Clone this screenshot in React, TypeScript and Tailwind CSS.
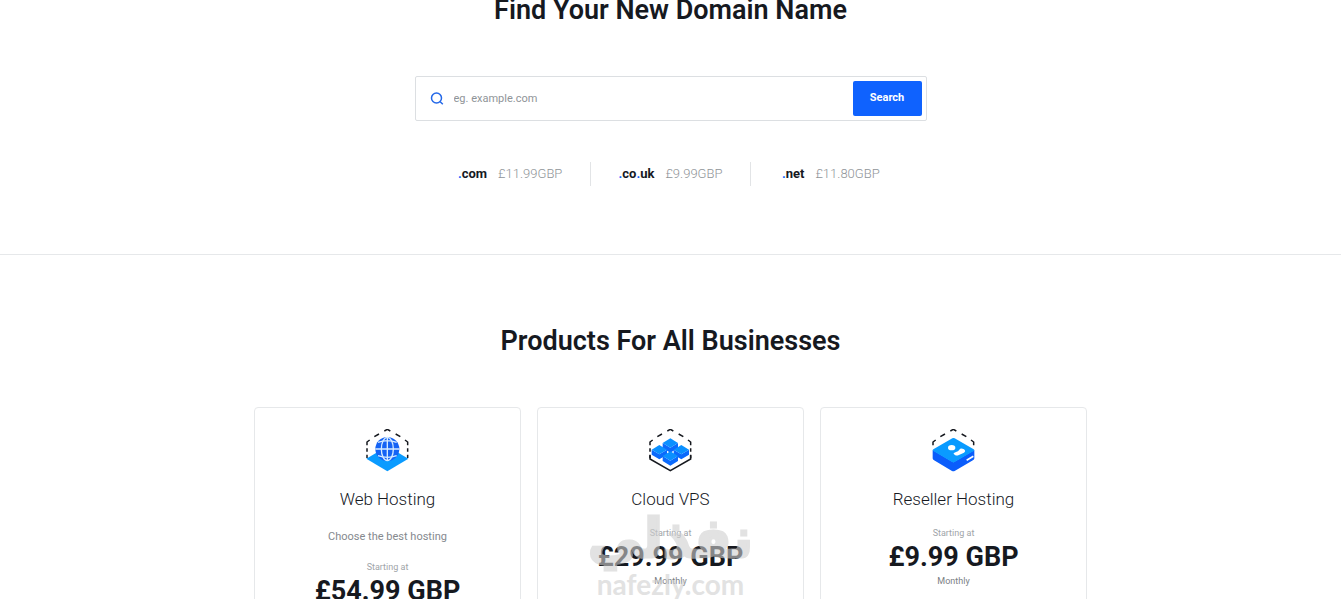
import type { ReactNode } from 'react';

interface Extension {
  parts: string[];
  price: string;
}

interface Product {
  name: string;
  description?: string;
  price: string;
  icon: ReactNode;
}

const extensions: Extension[] = [
  { parts: ['com'], price: '£11.99GBP' },
  { parts: ['co', 'uk'], price: '£9.99GBP' },
  { parts: ['net'], price: '£11.80GBP' },
];

function DashedFrame({ children, sides = true }: { children: ReactNode; sides?: boolean }) {
  return (
    <svg viewBox="34 28 132 132" className="h-11 w-11" aria-hidden="true">
      <g fill="none" stroke="#16191f" strokeWidth="4.5">
        <path d="M89 34L98 29L107 34M59 51L73 43M123 43L137 51M37 77V67L45 61M151 61L159 67V77" />
        {sides && <path d="M37 86V96M37 105V115M159 86V96M159 105V115" />}
      </g>
      {children}
    </svg>
  );
}

function WebHostingIcon() {
  return (
    <DashedFrame>
      <path d="M98 80L161 117L98 155L35 117Z" fill="#0a9bff" />
      <circle cx="98" cy="88" r="36" fill="#1463f5" />
      <g fill="none" stroke="#d5ebff" strokeWidth="4">
        <ellipse cx="98" cy="88" rx="18" ry="35" />
        <path d="M98 53V124M62 88H134M70 68Q98 58 126 68M70 108Q98 118 126 108" />
      </g>
    </DashedFrame>
  );
}

function Cube({ x, y }: { x: number; y: number }) {
  return (
    <g transform={`translate(${x} ${y})`}>
      <path d="M-23 0L0 14L23 0V15L0 29L-23 15Z" fill="#0b6afc" />
      <path d="M0 -14L23 0L0 14L-23 0Z" fill="#0a90ff" />
    </g>
  );
}

function CloudIcon() {
  return (
    <DashedFrame>
      <path d="M37 107V118L98 153L159 118V107" fill="none" stroke="#16191f" strokeWidth="4.5" />
      <Cube x={98} y={70} />
      <Cube x={65} y={90} />
      <Cube x={131} y={90} />
      <Cube x={98} y={109} />
    </DashedFrame>
  );
}

function ResellerIcon() {
  return (
    <DashedFrame sides={false}>
      <path d="M36 91L98 128L161 91V116Q161 119 158 121L102 154Q98 156 94 154L39 121Q36 119 36 116Z" fill="#0b5dfb" />
      <path d="M95 56Q98 54 102 56L159 89Q163 91 159 94L102 127Q98 129 94 127L38 94Q34 91 38 89Z" fill="#0a9bff" />
      <ellipse cx="93" cy="84" rx="11" ry="8" fill="#fff" />
      <path d="M102 105Q94 101 106 97Q113 96 116 90Q120 83 130 89Q137 95 130 99L113 107Q107 109 102 105Z" fill="#fff" />
      <path d="M138 122L158 110" stroke="#fff" strokeWidth="5" />
    </DashedFrame>
  );
}

const products: Product[] = [
  { name: 'Web Hosting', description: 'Choose the best hosting', price: '£54.99 GBP', icon: <WebHostingIcon /> },
  { name: 'Cloud VPS', price: '£29.99 GBP', icon: <CloudIcon /> },
  { name: 'Reseller Hosting', price: '£9.99 GBP', icon: <ResellerIcon /> },
];

function DomainSearch() {
  return (
    <form
      className="mx-auto flex w-full max-w-lg items-center rounded-xs border border-[#dcdfe2] bg-white p-1"
      onSubmit={(event) => event.preventDefault()}
    >
      <svg viewBox="0 0 14 14" className="ml-2.5 h-3.5 w-3.5 shrink-0" fill="none" stroke="#2468e8" strokeWidth="1.5" aria-hidden="true">
        <circle cx="6.5" cy="6" r="5" />
        <path d="M10.2 9.7L12.8 12.3" />
      </svg>
      <input
        type="text"
        aria-label="Domain name"
        placeholder="eg. example.com"
        className="h-[35px] min-w-0 flex-1 px-2.5 text-[11px] text-[#16191f] outline-none placeholder:text-[#8f9498]"
      />
      <button type="submit" className="h-[35px] w-[69px] rounded-xs bg-[#0f62fe] text-[11px] font-bold text-white">
        Search
      </button>
    </form>
  );
}

function ExtensionPrice({ parts, price }: Extension) {
  return (
    <li className="flex h-6 flex-1 items-center justify-center gap-[11px] border-r border-[#e2e4e6] text-[13px] leading-5 last:border-r-0">
      <strong className="font-bold text-[#16191f]">
        {parts.map((part) => (
          <span key={part}>
            <span className="text-[#0f62fe]">.</span>
            {part}
          </span>
        ))}
      </strong>
      <span className="font-light text-[#8f9498]">{price}</span>
    </li>
  );
}

function ProductCard({ name, description, price, icon }: Product) {
  return (
    <article className="flex flex-1 flex-col items-center rounded-sm border border-[#e6e8ea] bg-white pt-[21px] pb-10 text-center">
      {icon}
      <h3 className="mt-3.5 text-[17px] leading-6 font-light text-[#16191f]">{name}</h3>
      {description && <p className="mt-4 text-[11px] leading-5 text-[#85898e]">{description}</p>}
      <p className={`${description ? 'mt-3' : 'mt-3.5'} text-[9px] leading-4 text-[#a0a4a8]`}>Starting at</p>
      <p className="text-[27px] leading-8 font-bold text-[#16191f]">{price}</p>
      <p className="text-[9px] leading-4 text-[#7b8085]">Monthly</p>
    </article>
  );
}

function Watermark() {
  return (
    <div className="pointer-events-none absolute top-[508px] left-1/2 flex -translate-x-1/2 flex-col items-center text-[#cfcfcf] opacity-60">
      <span lang="ar" dir="rtl" className="font-['DejaVu_Sans',sans-serif] text-[54px] leading-[62px] font-bold [-webkit-text-stroke:3px_#cfcfcf]">
        نفذلي
      </span>
      <span className="font-['Lato',sans-serif] text-[28px] leading-7 font-bold">nafezly.com</span>
    </div>
  );
}

export default function App() {
  return (
    <main className="relative h-screen overflow-hidden bg-white font-['Roboto','Liberation_Sans',sans-serif]">
      <section className="-mt-2 border-b border-[#e6e8ea] pb-[68px]">
        <h2 className="text-center text-[27px] leading-9 font-semibold text-[#16191f]">Find Your New Domain Name</h2>
        <div className="mt-12">
          <DomainSearch />
        </div>
        <ul className="mx-auto mt-[41px] flex w-full max-w-[480px]">
          {extensions.map((extension) => (
            <ExtensionPrice key={extension.price} {...extension} />
          ))}
        </ul>
      </section>

      <section className="pt-[68px]">
        <h2 className="text-center text-[27px] leading-9 font-semibold text-[#16191f]">Products For All Businesses</h2>
        <div className="mx-auto mt-12 flex w-full max-w-[833px] items-stretch gap-4">
          {products.map((product) => (
            <ProductCard key={product.name} {...product} />
          ))}
        </div>
      </section>

      <Watermark />
    </main>
  );
}
